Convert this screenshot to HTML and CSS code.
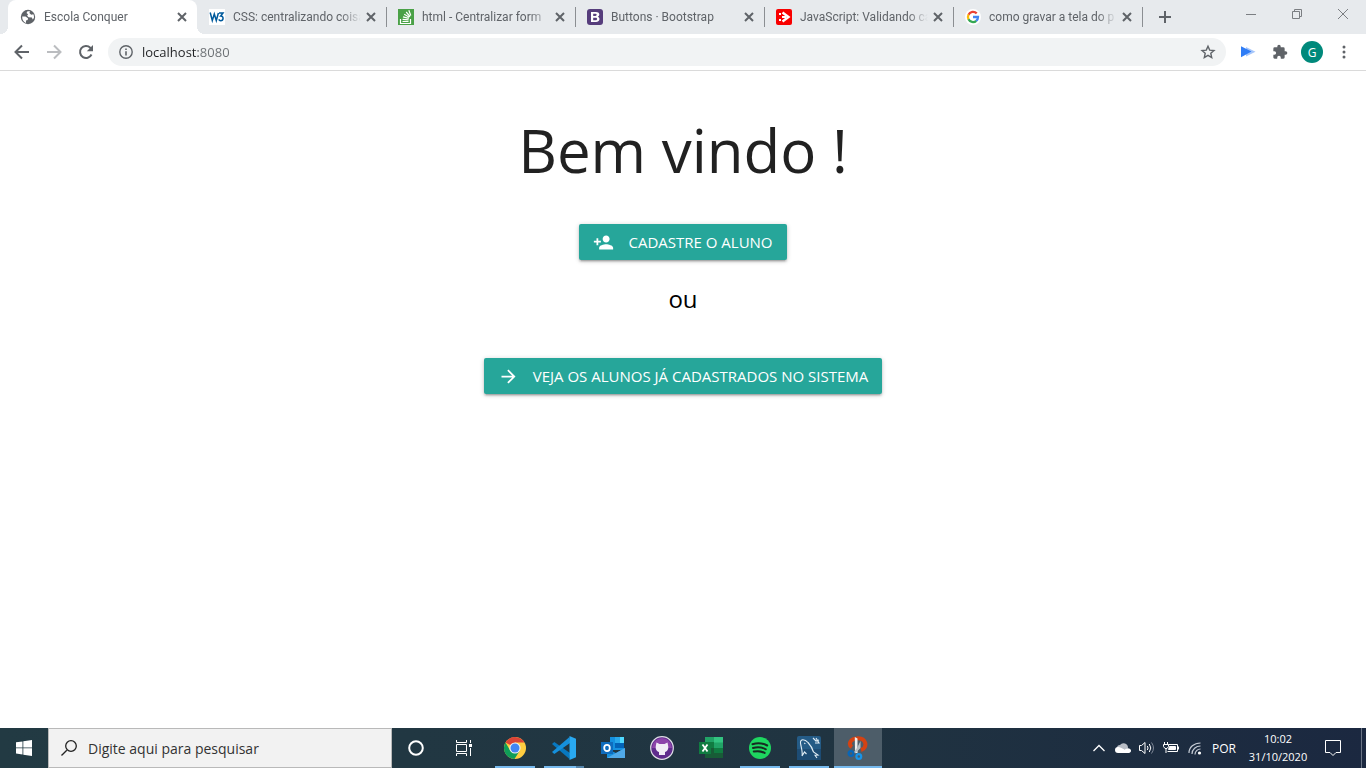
FILE: index.html
```html
<!DOCTYPE html>
<html lang="pt-BR">
<head>
<meta charset="utf-8">
<meta name="viewport" content="width=device-width, initial-scale=1">
<title>Escola Conquer</title>
<link rel="stylesheet" href="styles.css">
</head>
<body>
<header class="browser">
  <div class="tabstrip">
    <div class="tabs">
      <div class="tab tab-active">
        <svg class="favicon" viewBox="0 0 16 16"><circle cx="8" cy="8" r="7.200" fill="#5f6368"/><path d="M2.200 7.500h3.300l2.500 1.700-.3 1.800-1.700.6v2.300C3.500 13 2 10.500 2.200 7.500zM7.500 2.200 6.500 4l1.600 1.200-1 1.500 1.500 1.500 3.300.2.800 2 1.200-1.300c.3-1.500 0-2.900-.6-3.800l-2.100.4-1.800-1.800.6-1.700z" fill="#fff"/></svg>
        <span class="tab-title">Escola Conquer</span>
        <button class="tab-close" type="button" aria-label="Fechar guia"><svg viewBox="0 0 16 16"><path d="M4 4l8 8M12 4l-8 8"/></svg></button>
      </div>
      <div class="tab">
        <svg class="favicon" viewBox="0 0 16 16"><path fill="#fff" d="M0 0h16v16H0z"/><path d="M1.200 3.500 3.300 11.500 5.300 5 7.300 11.500 9.400 4" fill="none" stroke="#005a9c" stroke-width="1.500"/><path d="M10 4h4l-2.300 3c3.400 0 2.900 4.700 0 4.700-1 0-1.600-.6-1.900-1.300" fill="none" stroke="#005a9c" stroke-width="1.500"/></svg>
        <span class="tab-title">CSS: centralizando coisa</span>
        <button class="tab-close" type="button" aria-label="Fechar guia"><svg viewBox="0 0 16 16"><path d="M4 4l8 8M12 4l-8 8"/></svg></button>
      </div>
      <div class="tab">
        <svg class="favicon" viewBox="0 0 16 16"><path fill="#4aa147" d="M0 0h16v16H0z"/><path d="M2.500 10v4.500h10V10M4.500 12.500h6M4.600 10.300l6 .6M5 7.800l5.800 1.600M6.200 5.300l5.100 3M8.200 3l3.800 4.500M10.800 1.300l2 5.200" fill="none" stroke="#fff" stroke-width="1.200"/></svg>
        <span class="tab-title">html - Centralizar form</span>
        <button class="tab-close" type="button" aria-label="Fechar guia"><svg viewBox="0 0 16 16"><path d="M4 4l8 8M12 4l-8 8"/></svg></button>
      </div>
      <div class="tab">
        <svg class="favicon" viewBox="0 0 16 16"><rect width="16" height="16" rx="3" fill="#563d7c"/><path fill-rule="evenodd" fill="#fff" d="M4 3h5c4 0 4.200 3.800 1.800 4.700C13.500 8.600 13 13 9 13H4zM6.200 4.800V7h2.300c1.600 0 1.600-2.200 0-2.200zM6.200 8.700v2.500h2.500c1.900 0 1.900-2.500 0-2.500z"/></svg>
        <span class="tab-title">Buttons · Bootstrap</span>
        <button class="tab-close" type="button" aria-label="Fechar guia"><svg viewBox="0 0 16 16"><path d="M4 4l8 8M12 4l-8 8"/></svg></button>
      </div>
      <div class="tab">
        <svg class="favicon" viewBox="0 0 16 16"><rect width="16" height="16" rx="2" fill="#f80000"/><path d="M6.500 3.500 12.500 8l-6 4.500" fill="none" stroke="#fff" stroke-width="2.400"/><path d="M3 4h2v2H3zM3 10h2v2H3zM6 7h4v2H6z" fill="#fff"/></svg>
        <span class="tab-title">JavaScript: Validando ca</span>
        <button class="tab-close" type="button" aria-label="Fechar guia"><svg viewBox="0 0 16 16"><path d="M4 4l8 8M12 4l-8 8"/></svg></button>
      </div>
      <div class="tab">
        <svg class="favicon" viewBox="0 0 16 16"><circle cx="8" cy="8" r="8" fill="#fff"/><g fill="none" stroke-width="2.300"><path d="M11.700 4.400A5 5 0 0 0 3.500 5.700" stroke="#ea4335"/><path d="M3.600 5.500a5 5 0 0 0 0 5" stroke="#fbbc05"/><path d="M3.500 10.300a5 5 0 0 0 7.800 1.500" stroke="#34a853"/><path d="M8 8h5a5 5 0 0 1-1.800 3.900" stroke="#4285f4"/></g></svg>
        <span class="tab-title">como gravar a tela do p</span>
        <button class="tab-close" type="button" aria-label="Fechar guia"><svg viewBox="0 0 16 16"><path d="M4 4l8 8M12 4l-8 8"/></svg></button>
      </div>
    </div>
    <button class="new-tab" type="button" aria-label="Nova guia"><svg width="14" height="14" viewBox="0 0 14 14"><path d="M7 1v12M1 7h12" stroke="#5f6368" stroke-width="2"/></svg></button>
    <div class="window-controls">
      <button type="button" aria-label="Minimizar"><svg viewBox="0 0 12 12"><path d="M1 6.500h10"/></svg></button>
      <button type="button" aria-label="Restaurar"><svg viewBox="0 0 12 12"><path d="M1.500 3.500h7v7h-7zM3.500 3.500v-2h7v7h-2"/></svg></button>
      <button type="button" aria-label="Fechar"><svg viewBox="0 0 12 12"><path d="M1 1l10 10M11 1 1 11"/></svg></button>
    </div>
  </div>
  <div class="toolbar">
    <button class="tool" type="button" aria-label="Voltar"><svg viewBox="0 0 16 16"><path d="M15 8H2M8 1.500 1.500 8 8 14.500" fill="none" stroke="#5f6368" stroke-width="2"/></svg></button>
    <button class="tool" type="button" aria-label="Avançar"><svg viewBox="0 0 16 16"><path d="M1 8h13M8 1.500 14.500 8 8 14.500" fill="none" stroke="#bbbdc0" stroke-width="2"/></svg></button>
    <button class="tool" type="button" aria-label="Recarregar"><svg viewBox="0 0 16 16"><path d="M13.500 10.500A6 6 0 1 1 12.300 3.700L14 5.400" fill="none" stroke="#5f6368" stroke-width="2"/><path d="M15 1v6.200H8.800z" fill="#5f6368"/></svg></button>
    <div class="omnibox">
      <svg class="info" viewBox="0 0 14 14"><circle cx="7" cy="7" r="6.200" fill="none" stroke="#5f6368" stroke-width="1.400"/><path d="M6.200 6.200h1.600v4.300H6.200zM6.200 3.500h1.600V5H6.200z" fill="#5f6368"/></svg>
      <input class="address" type="text" value="localhost:8080" aria-label="Endereço">
      <button class="star" type="button" aria-label="Favoritar"><svg viewBox="0 0 16 16"><path d="M8 2.200l1.700 3.900 4.300.4-3.200 2.800.9 4.200L8 11.300l-3.700 2.200.9-4.200L2 6.500l4.300-.4z" fill="none" stroke="#5f6368" stroke-width="1.400"/></svg></button>
    </div>
    <button class="tool" type="button" aria-label="Extensão"><svg viewBox="0 0 16 16"><path d="M6 3l9.500 4.700L6 12.500z" fill="#a6c6fa"/><path d="M1 2.200 11.500 7.600 1 13.300z" fill="#2f7df6"/></svg></button>
    <button class="tool" type="button" aria-label="Extensões"><svg viewBox="0 0 24 24"><path fill="#5f6368" d="M20.500 11H19V7a2 2 0 0 0-2-2h-4V3.500a2.500 2.500 0 0 0-5 0V5H4a2 2 0 0 0-2 2v3.800h1.500a2.700 2.700 0 0 1 0 5.400H2V20c0 1.100.9 2 2 2h3.800v-1.500a2.700 2.700 0 0 1 5.400 0V22H17a2 2 0 0 0 2-2v-4h1.500a2.500 2.500 0 0 0 0-5z"/></svg></button>
    <button class="avatar" type="button">G</button>
    <button class="tool" type="button" aria-label="Menu"><svg viewBox="0 0 16 16" fill="#5f6368"><circle cx="8" cy="3" r="1.500"/><circle cx="8" cy="8" r="1.500"/><circle cx="8" cy="13" r="1.500"/></svg></button>
  </div>
</header>

<main class="page">
  <h1 class="welcome">Bem vindo !</h1>
  <a class="btn" href="#cadastro"><svg viewBox="0 0 24 24"><path d="M15 12c2.210 0 4-1.790 4-4s-1.790-4-4-4-4 1.790-4 4 1.790 4 4 4zm-9-2V7H4v3H1v2h3v3h2v-3h3v-2H6zm9 4c-2.670 0-8 1.340-8 4v2h16v-2c0-2.660-5.330-4-8-4z"/></svg>CADASTRE O ALUNO</a>
  <p class="or">ou</p>
  <a class="btn" href="#alunos"><svg viewBox="0 0 24 24"><path d="M12 4l-1.410 1.410L16.170 11H4v2h12.170l-5.580 5.590L12 20l8-8z"/></svg>VEJA OS ALUNOS JÁ CADASTRADOS NO SISTEMA</a>
</main>

<footer class="taskbar">
  <button class="task" type="button" aria-label="Iniciar"><svg width="16" height="16" viewBox="0 0 16 16" fill="#fff"><path d="M0 2.300 6.500 1.400v6.100H0zM7.300 1.300 16 0v7.500H7.300zM0 8.300h6.500v6.200L0 13.600zM7.300 8.300H16V16l-8.700-1.300z"/></svg></button>
  <label class="search">
    <svg viewBox="0 0 16 16"><path d="M5.800 10.200.5 15.500" /><circle cx="10" cy="6" r="5.300"/></svg>
    <input type="text" placeholder="Digite aqui para pesquisar" aria-label="Digite aqui para pesquisar">
  </label>
  <button class="task" type="button" aria-label="Cortana"><svg width="16" height="16" viewBox="0 0 16 16"><circle cx="8" cy="8" r="6.800" fill="none" stroke="#fff" stroke-width="2"/></svg></button>
  <button class="task" type="button" aria-label="Visão de tarefas"><svg width="16" height="16" viewBox="0 0 16 16" fill="none" stroke="#fff"><path d="M.5 0v2.500h10V0M.5 16v-2.500h10V16M.5 4.500h10v7H.5zM14.500 0v3M14.500 8v8"/><path fill="#fff" stroke="none" d="M13 4h3v3h-3z"/></svg></button>
  <div class="apps">
    <button class="task running" type="button" aria-label="Chrome"><svg viewBox="0 0 24 24"><circle cx="12" cy="12" r="11" fill="#ffcd40"/><path d="M12 12 2.500 6.400A11 11 0 0 1 21.500 6.500H12z" fill="#db4437"/><path d="M2.500 6.400A11 11 0 0 0 11.500 23l5.200-8.200L12 12l-4.700 2.700z" fill="#0f9d58"/><circle cx="12" cy="12" r="5.600" fill="#f1f1f1"/><circle cx="12" cy="12" r="4.500" fill="#4285f4"/></svg></button>
    <button class="task running grouped" type="button" aria-label="Visual Studio Code"><svg viewBox="0 0 24 24"><path d="M2.300 6 0 8l17.500 15 .5-6z" fill="#0878c0"/><path d="M0 16l2.300 2L18 7l-.5-6z" fill="#1590dc"/><path d="M17.500 0 24 2.800v18.400L17.500 24z" fill="#29a9f1"/></svg></button>
    <button class="task" type="button" aria-label="Outlook"><svg viewBox="0 0 24 24"><path d="M9 1h14v13H9z" fill="#1490df"/><path d="M14 1h5v6h-5z" fill="#28a8ea"/><path d="M19 1h4v6h-4z" fill="#50d9ff"/><path d="M14 7h9v5h-9z" fill="#0364b8"/><path d="M6 13l9 4 9-5v10H6z" fill="#1490df"/><path d="M6 22 24 12v10z" fill="#50a9e8"/><path d="M0 6h12v12H0z" fill="#0f6cbd"/><ellipse cx="6" cy="12" rx="2.800" ry="3.200" fill="none" stroke="#fff" stroke-width="1.800"/></svg></button>
    <button class="task" type="button" aria-label="GitHub Desktop"><svg viewBox="0 0 24 24"><circle cx="12" cy="12" r="11.300" fill="#5f2c8c" stroke="#dedde5" stroke-width="1.200"/><path d="M2 12a10 10 0 0 1 20 0z" fill="#8c44aa"/><path d="M6.500 6.500 9.500 8h5l3-1.500.7 3.500c.6 4-1.500 6.500-6.200 6.500S5.200 14 5.800 10z" fill="#f1edf6"/><path d="M9 16h6v3H9z" fill="#f1edf6"/></svg></button>
    <button class="task" type="button" aria-label="Excel"><svg viewBox="0 0 24 24"><path d="M6 1h18v21H6z" fill="#21a366"/><path d="M15 1h9v5.500h-9z" fill="#33c481"/><path d="M6 6h9v6H6z" fill="#107c41"/><path d="M6 12h9v5H6z" fill="#185c37"/><path d="M15 12h9v5h-9z" fill="#107c41"/><path d="M6 17h18v5H6z" fill="#185c37"/><path d="M0 6h12v12H0z" fill="#107c41"/><path d="M3.500 8.500l5 7M8.500 8.500l-5 7" stroke="#fff" stroke-width="1.800"/></svg></button>
    <button class="task running" type="button" aria-label="Spotify"><svg viewBox="0 0 24 24"><circle cx="12" cy="12" r="11" fill="#1ed760"/><path d="M4.500 8.200c5-1.600 10.500-1 14.700 1.300M5 12c4.500-1.300 9-.8 12.800 1.300M5.800 15.600c4-.9 7.500-.5 10.800 1.300" fill="none" stroke="#172b22" stroke-width="2" stroke-linecap="round"/></svg></button>
    <button class="task running" type="button" aria-label="MySQL Workbench"><svg viewBox="0 0 24 24"><rect width="24" height="24" rx="2" fill="#245b86"/><path d="M0 13h24v11H0z" fill="#1d4c74"/><path d="M5 20C6 16 4 11 3.500 7 3 2.500 8 3 11 6.500c3 3.200 4.500 6 5.500 9.500l4.500 3-3 .3 2 2.700M5 20l2.500-4 2 2M7.300 6.800l1 1.200M16 2l3 3 3-1M18 7l4 0-3-5" fill="none" stroke="#e1edf5" stroke-width="1.100"/></svg></button>
    <button class="task running selected" type="button" aria-label="Ferramenta de Captura"><svg viewBox="0 0 24 24"><path d="M6 11C1.500 8 5 2.500 11 2.200c9-.7 11.500 9.300 4 11.800" fill="none" stroke="#d34213" stroke-width="4"/><path d="M8.800 1 11.500 2.500V17H9z" fill="#eee"/><path d="M14.500 5v7L9 17.500 8 16l3-4z" fill="#b4bdc2"/><circle cx="5" cy="17.500" r="2.400" fill="none" stroke="#0866b8" stroke-width="2.200"/><circle cx="12.800" cy="20.500" r="2.400" fill="none" stroke="#1894e8" stroke-width="2.200"/></svg></button>
  </div>
  <div class="tray">
    <button class="tray-item" type="button" aria-label="Mostrar ícones ocultos"><svg viewBox="0 0 16 16"><path d="M2.500 11 8 5.500l5.500 5.500" fill="none" stroke="#fff" stroke-width="1.300"/></svg></button>
    <button class="tray-item" type="button" aria-label="OneDrive"><svg viewBox="0 0 16 16"><path d="M2 8a3 3 0 0 1 3-3 4.500 4.500 0 0 1 8 3l-6 3z" fill="#b9bec6"/><path d="M3 13a3 3 0 0 1 0-6c1 0 2 .3 3 .8L9.500 9.500 12 8.300c5-.6 5 4.700 1.800 4.700z" fill="#fff"/></svg></button>
    <button class="tray-item" type="button" aria-label="Volume"><svg viewBox="0 0 16 16" fill="none" stroke="#fff"><path d="M.5 5.500h2l3.500-3v11l-3.500-3h-2zM8.300 6q1.500 2 0 4M10.300 4q3 4 0 8"/><path d="M12.500 2.500q4 5.500 0 11" stroke="#7e8796"/></svg></button>
    <button class="tray-item" type="button" aria-label="Bateria"><svg viewBox="0 0 16 16" fill="none" stroke="#fff"><path d="M5.500 4.500h9v7h-10M15.500 6.500v3M1.500 2v2M4.500 2v2M.5 4.500h5v2l-1.500 2H2L.5 6.500zM3 8.500V13"/><path d="M6.500 6.500h6v3h-7z" fill="#fff"/></svg></button>
    <button class="tray-item" type="button" aria-label="Rede"><svg viewBox="0 0 16 16" fill="none" stroke="#c6ccd5" stroke-width="1.200"><path d="M2 13C2 7 7 3 13.500 3M5 14c0-4.500 4-8 8.500-8M8 14.500C8 11.500 10.500 9 13.500 9"/><circle cx="12.500" cy="13" r="1.600" fill="#fff" stroke="none"/></svg></button>
    <button class="language" type="button">POR</button>
    <button class="clock" type="button"><span>10:02</span><span>31/10/2020</span></button>
    <button class="notify" type="button" aria-label="Notificações"><svg width="16" height="16" viewBox="0 0 16 16"><path d="M.5.500h15v12H11l-3 3-3-3H.5z" fill="none" stroke="#fff"/></svg></button>
  </div>
</footer>
</body>
</html>
```

FILE: styles.css
```css
* { box-sizing: border-box; }

body {
  margin: 0;
  min-height: 100vh;
  display: flex;
  flex-direction: column;
  background: #fff;
  color: rgba(0, 0, 0, 0.87);
  font-family: "Open Sans", "Noto Sans", sans-serif;
  font-size: 12px;
}

button, input { font: inherit; }

button {
  display: flex;
  align-items: center;
  justify-content: center;
  padding: 0;
  border: 0;
  background: none;
}

svg { display: block; flex: none; }

/* Browser */
.browser { border-bottom: 1px solid #dadada; }

.tabstrip {
  display: flex;
  height: 34px;
  padding-left: 8px;
  background: #e7eaed;
}

.tabs {
  display: flex;
  flex: 0 1 1134px;
  min-width: 0;
}

.tab {
  display: flex;
  flex: 1 1 0;
  align-items: center;
  min-width: 0;
  padding: 0 7px 0 12px;
  color: #5f6368;
  font-family: Roboto, "Open Sans", sans-serif;
}

.tab + .tab + .tab,
.new-tab {
  background: linear-gradient(#8b8e92, #8b8e92) 0 7px / 1px 20px no-repeat;
}

.tab-active {
  position: relative;
  border-radius: 8px 8px 0 0;
  background: #fff;
}

.tab-active::before,
.tab-active::after {
  content: "";
  position: absolute;
  bottom: 0;
  width: 8px;
  height: 8px;
}

.tab-active::before {
  right: 100%;
  background: radial-gradient(circle at 0 0, transparent 8px, #fff 8px);
}

.tab-active::after {
  left: 100%;
  background: radial-gradient(circle at 100% 0, transparent 8px, #fff 8px);
}

.favicon { width: 16px; height: 16px; }

.tab-title {
  flex: 1;
  min-width: 0;
  margin: 0 2px 0 8px;
  overflow: hidden;
  white-space: nowrap;
  mask-image: linear-gradient(to left, transparent, #000 20px);
}

.tab-close svg {
  width: 16px;
  height: 16px;
  fill: none;
  stroke: #5f6368;
  stroke-width: 2;
}

.new-tab { width: 46px; }

.window-controls {
  display: flex;
  height: 28px;
  margin-left: auto;
}

.window-controls button { width: 46px; }

.window-controls svg {
  width: 12px;
  height: 12px;
  fill: none;
  stroke: #7b7e82;
}

.toolbar {
  display: flex;
  align-items: center;
  gap: 4px;
  height: 36px;
  padding: 0 8px;
}

.tool { width: 28px; height: 28px; }
.tool svg { width: 16px; height: 16px; }

.omnibox {
  display: flex;
  flex: 1;
  align-items: center;
  height: 28px;
  margin: 0 4px;
  padding: 0 10px 0 11px;
  border-radius: 14px;
  background: #f1f3f4;
}

.info { width: 14px; height: 14px; margin-right: 9px; }

.address {
  flex: 1;
  min-width: 0;
  padding: 0;
  border: 0;
  outline: 0;
  font-size: 13px;
  color: transparent;
  background: linear-gradient(90deg, #202124 56px, #6b6f73 56px);
  background-clip: text;
}

.star svg { width: 16px; height: 16px; }

.avatar {
  width: 22px;
  height: 22px;
  margin: 0 3px;
  border-radius: 50%;
  background: #00897b;
  color: #fff;
}

/* Page */
.page {
  display: flex;
  flex: 1;
  flex-direction: column;
  align-items: center;
  padding: 0 16px;
}

.welcome {
  margin: 45px 0 39px;
  font-size: 60px;
  line-height: 69px;
  font-weight: 400;
}

.btn {
  display: flex;
  align-items: center;
  min-height: 36px;
  padding: 0 14px;
  border-radius: 2px;
  background: #26a69a;
  color: #fff;
  font-size: 15px;
  line-height: 20px;
  text-decoration: none;
  box-shadow: 0 2px 2px 0 rgba(0, 0, 0, 0.14), 0 3px 1px -2px rgba(0, 0, 0, 0.12), 0 1px 5px 0 rgba(0, 0, 0, 0.2);
}

.btn svg {
  width: 21px;
  height: 21px;
  margin-right: 14px;
  fill: #fff;
}

.or {
  margin: 21px 0 41px;
  color: #000;
  font-size: 24px;
  line-height: 36px;
}

/* Taskbar */
.taskbar {
  display: flex;
  height: 40px;
  color: #fff;
  background: linear-gradient(90deg, #223a43, #203441 60%, #1b2840);
}

.task { width: 48px; height: 40px; }

.search {
  display: flex;
  flex: 0 1 344px;
  align-items: center;
  min-width: 0;
  padding: 0 12px;
  border: 1px solid #b9b9b9;
  background: #f2f2f2;
}

.search svg {
  width: 16px;
  height: 16px;
  margin-right: 11px;
  fill: none;
  stroke: #222;
  stroke-width: 1.3;
}

.search input {
  flex: 1;
  min-width: 0;
  padding: 0;
  border: 0;
  outline: 0;
  background: none;
  font-size: 14px;
}

.search input::placeholder { color: #333; opacity: 1; }

.apps { display: flex; gap: 1px; margin-left: 3px; }
.apps svg { width: 24px; height: 24px; }

.running { background: linear-gradient(#76b9ed, #76b9ed) center bottom / 40px 2px no-repeat; }
.grouped { background-image: linear-gradient(90deg, #76b9ed 32px, #5484aa 32px); }

.selected {
  background-color: #4d5d69;
  background-size: 48px 2px;
}

.tray {
  display: flex;
  margin-left: auto;
  padding-right: 4px;
}

.tray button { color: #fff; }
.tray-item { width: 24px; }
.tray-item svg { width: 16px; height: 16px; }
.language { width: 34px; }

.clock {
  flex-direction: column;
  width: 74px;
  font-size: 11px;
  line-height: 18px;
}

.notify {
  width: 47px;
  padding-right: 10px;
  border-right: 1px solid #6a7485;
}
```
